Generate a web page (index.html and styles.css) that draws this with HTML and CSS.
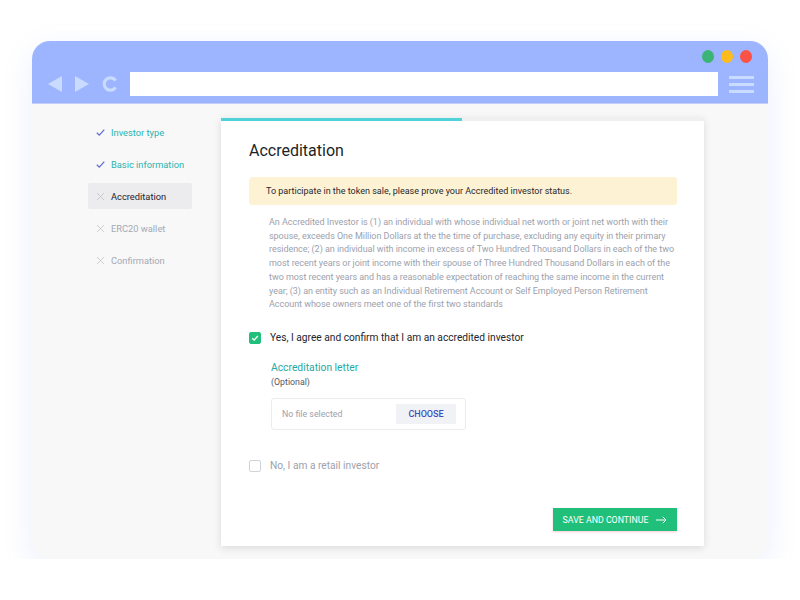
FILE: index.html
```html
<!DOCTYPE html>
<html lang="en">
  <head>
    <meta charset="UTF-8" />
    <meta name="viewport" content="width=device-width, initial-scale=1.0" />
    <title>Accreditation</title>
    <link rel="stylesheet" href="styles.css">
  </head>
  <body>
    <div class="browser">
      <div class="browser-head">
        <div class="dots">
          <span class="dot green"></span>
          <span class="dot yellow"></span>
          <span class="dot red"></span>
        </div>
        <div class="toolbar">
          <svg class="nav-icon" width="74" height="18" viewBox="0 0 74 18">
            <polygon points="16,1 16,17 2,9" fill="#c9dbff" />
            <polygon points="29,1 29,17 43,9" fill="#c9dbff" />
            <path d="M69.6 5.6 A6.2 6.2 0 1 0 69.6 12.4" fill="none" stroke="#c9dbff" stroke-width="3.2" />
          </svg>
          <div class="address"></div>
          <div class="menu">
            <span></span><span></span><span></span>
          </div>
        </div>
      </div>

      <div class="browser-body">
        <ul class="steps">
          <li class="done">
            <svg class="mark" width="9" height="9" viewBox="0 0 9 9"><path d="M0.8 4.8 L3.3 7.2 L8.3 1.6" fill="none" stroke="#5b6bd0" stroke-width="1.2" /></svg>
            Investor type
          </li>
          <li class="done">
            <svg class="mark" width="9" height="9" viewBox="0 0 9 9"><path d="M0.8 4.8 L3.3 7.2 L8.3 1.6" fill="none" stroke="#5b6bd0" stroke-width="1.2" /></svg>
            Basic information
          </li>
          <li class="current">
            <svg class="mark" width="9" height="9" viewBox="0 0 9 9"><path d="M1 1 L8 8 M8 1 L1 8" stroke="#c4c7ce" stroke-width="0.9" /></svg>
            Accreditation
          </li>
          <li>
            <svg class="mark" width="9" height="9" viewBox="0 0 9 9"><path d="M1 1 L8 8 M8 1 L1 8" stroke="#c4c7ce" stroke-width="0.9" /></svg>
            ERC20 wallet
          </li>
          <li>
            <svg class="mark" width="9" height="9" viewBox="0 0 9 9"><path d="M1 1 L8 8 M8 1 L1 8" stroke="#c4c7ce" stroke-width="0.9" /></svg>
            Confirmation
          </li>
        </ul>

        <div class="card">
          <div class="progress"><div class="progress-fill"></div></div>
          <div class="card-body">
            <h1>Accreditation</h1>
            <div class="notice">To participate in the token sale, please prove your Accredited investor status.</div>
            <p class="terms">An Accredited Investor is (1) an individual with whose individual net worth or joint net worth with their spouse, exceeds One Million Dollars at the the time of purchase, excluding any equity in their primary residence; (2) an individual with income in excess of Two Hundred Thousand Dollars in each of the two most recent years or joint income with their spouse of Three Hundred Thousand Dollars in each of the two most recent years and has a reasonable expectation of reaching the same income in the current year; (3) an entity such as an Individual Retirement Account or Self Employed Person Retirement Account whose owners meet one of the first two standards</p>

            <label class="check checked">
              <span class="box">
                <svg width="12" height="12" viewBox="0 0 12 12"><path d="M2.6 6.2 L5 8.4 L9.4 3.6" fill="none" stroke="#fff" stroke-width="1.6" /></svg>
              </span>
              Yes, I agree and confirm that I am an accredited investor
            </label>

            <div class="upload">
              <div class="upload-title">Accreditation letter</div>
              <div class="upload-note">(Optional)</div>
              <div class="file">
                <span class="file-name">No file selected</span>
                <button class="choose">CHOOSE</button>
              </div>
            </div>

            <label class="check retail">
              <span class="box"></span>
              No, I am a retail investor
            </label>

            <div class="actions">
              <button class="save">
                SAVE AND CONTINUE
                <svg class="arrow" width="11" height="8" viewBox="0 0 11 8"><path d="M0 4 H10 M6.8 0.8 L10 4 L6.8 7.2" fill="none" stroke="#fff" stroke-width="1" /></svg>
              </button>
            </div>
          </div>
        </div>
      </div>
    </div>
  </body>
</html>
```

FILE: styles.css
```css
body {
  margin: 0;
  background: #fff;
  font-family: Roboto, "Liberation Sans", sans-serif;
}

.browser {
  width: 736px;
  height: 518px;
  margin: 41px 0 0 32px;
  border-radius: 18px;
  background: #f8f8f8;
  box-shadow: 0 10px 30px rgba(120, 140, 255, 0.14);
  overflow: hidden;
  display: flex;
  flex-direction: column;
}

.browser-head {
  height: 62px;
  background: #9db4ff;
  border-bottom: 1px solid #c2d0ff;
  display: flex;
  flex-direction: column;
}

.dots {
  display: flex;
  justify-content: flex-end;
  gap: 7px;
  padding: 9px 16px 0 0;
  height: 13px;
}

.dot {
  width: 12px;
  height: 13px;
  border-radius: 50%;
}

.dot.green { background: #3cb475; }
.dot.yellow { background: #fdbc1c; }
.dot.red { background: #fc5245; }

.toolbar {
  display: flex;
  align-items: center;
  margin-top: 9px;
  padding-left: 14px;
}

.nav-icon {
  margin-right: 10px;
}

.address {
  width: 588px;
  height: 24px;
  background: #fff;
}

.menu {
  display: flex;
  flex-direction: column;
  gap: 4px;
  margin-left: 11px;
}

.menu span {
  display: block;
  width: 25px;
  height: 3px;
  background: #c9dbff;
}

.browser-body {
  flex: 1;
  display: flex;
  padding: 14px 0 0 56px;
}

.steps {
  list-style: none;
  margin: 1px 29px 0 0;
  padding: 0;
  width: 104px;
  display: flex;
  flex-direction: column;
  gap: 6px;
}

.steps li {
  height: 26px;
  display: flex;
  align-items: center;
  font-size: 9.3px;
  color: #a5a9b3;
  border-radius: 2px;
}

.steps .mark {
  margin: 0 6px 0 8px;
}

.steps li.done {
  color: #2bb3ad;
}

.steps li.current {
  background: #ececef;
  color: #1f2129;
}

.card {
  width: 483px;
  height: 428px;
  background: #fff;
  box-shadow: 0 2px 8px rgba(0, 0, 0, 0.12);
  display: flex;
  flex-direction: column;
}

.progress {
  height: 3px;
  background: #f0f0f0;
}

.progress-fill {
  width: 241px;
  height: 3px;
  background: #4fd3d9;
}

.card-body {
  flex: 1;
  padding: 20px 27px 15px 28px;
  display: flex;
  flex-direction: column;
}

h1 {
  margin: 0;
  font-size: 16px;
  font-weight: 400;
  color: #1d1f26;
  line-height: 19px;
}

.notice {
  margin-top: 17px;
  height: 28px;
  line-height: 28px;
  background: #fdf3d4;
  border-radius: 3px;
  padding-left: 17px;
  font-size: 9px;
  color: #262830;
}

.terms {
  margin: 11px -2px 0 20px;
  font-size: 9px;
  letter-spacing: -0.04px;
  line-height: 13.7px;
  color: #9ca1ad;
}

.check {
  display: flex;
  align-items: center;
  gap: 9px;
  font-size: 10.2px;
  color: #9ca1ad;
  margin-top: 20px;
}

.check.checked {
  color: #22252d;
}

.check .box {
  width: 10px;
  height: 10px;
  border: 1px solid #cfd3db;
  border-radius: 2px;
  display: flex;
  align-items: center;
  justify-content: center;
}

.check.checked .box {
  background: #21c07a;
  border-color: #21c07a;
}

.upload {
  margin: 17px 0 0 22px;
}

.upload-title {
  font-size: 10.3px;
  color: #1fa9a2;
}

.upload-note {
  margin-top: 3px;
  font-size: 8.8px;
  color: #555963;
}

.file {
  box-sizing: border-box;
  margin-top: 11px;
  width: 195px;
  height: 32px;
  border: 1px solid #ececec;
  border-radius: 3px;
  display: flex;
  align-items: center;
  justify-content: space-between;
  padding: 0 9px 0 10px;
}

.file-name {
  font-size: 8.8px;
  color: #9ca1ad;
}

.choose {
  width: 60px;
  height: 20px;
  border: none;
  background: #f0f2f5;
  color: #3c4fc0;
  font-family: Roboto, "Liberation Sans", sans-serif;
  font-size: 9px;
  font-weight: 500;
  padding: 0;
}

.check.retail {
  margin-top: 30px;
}

.actions {
  margin-top: auto;
  display: flex;
  justify-content: flex-end;
}

.save {
  height: 23px;
  width: 124px;
  border: none;
  background: #21c07a;
  color: #fff;
  font-family: Roboto, "Liberation Sans", sans-serif;
  font-size: 8.8px;
  padding: 0;
  display: flex;
  align-items: center;
  justify-content: center;
  gap: 8px;
  box-shadow: 0 1px 2px rgba(240, 120, 160, 0.4);
}
```
